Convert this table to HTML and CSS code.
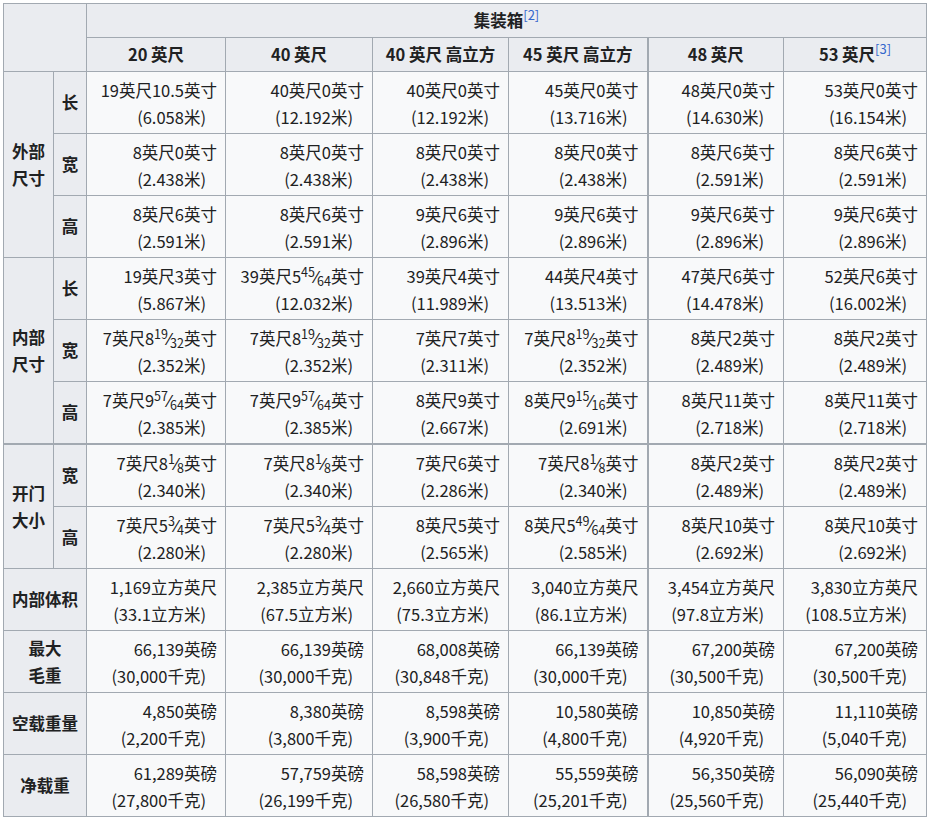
FILE: index.html
```html
<!DOCTYPE html>
<html lang="zh">
<head>
<meta charset="utf-8">
<title>集装箱尺寸</title>
<link rel="stylesheet" href="styles.css">
</head>
<body>
<table class="wikitable">
<colgroup>
<col class="c-a"><col class="c-b"><col class="c-1"><col class="c-2"><col class="c-3"><col class="c-4"><col class="c-5"><col class="c-6">
</colgroup>
<thead>
<tr class="h1">
<th colspan="2" rowspan="2"></th>
<th colspan="6">集装箱<sup class="ref">[2]</sup></th>
</tr>
<tr class="h2">
<th>20 英尺</th>
<th>40 英尺</th>
<th>40 英尺 高立方</th>
<th>45 英尺 高立方</th>
<th class="k">48 英尺</th>
<th>53 英尺<sup class="ref">[3]</sup></th>
</tr>
</thead>
<tbody>
<tr>
<th rowspan="3">外部<br>尺寸</th>
<th>长</th>
<td><span class="l1">19英尺10.5英寸</span><span class="l2">(6.058米)</span></td>
<td><span class="l1">40英尺0英寸</span><span class="l2">(12.192米)</span></td>
<td><span class="l1">40英尺0英寸</span><span class="l2">(12.192米)</span></td>
<td><span class="l1">45英尺0英寸</span><span class="l2">(13.716米)</span></td>
<td class="k"><span class="l1">48英尺0英寸</span><span class="l2">(14.630米)</span></td>
<td><span class="l1">53英尺0英寸</span><span class="l2">(16.154米)</span></td>
</tr>
<tr>
<th>宽</th>
<td><span class="l1">8英尺0英寸</span><span class="l2">(2.438米)</span></td>
<td><span class="l1">8英尺0英寸</span><span class="l2">(2.438米)</span></td>
<td><span class="l1">8英尺0英寸</span><span class="l2">(2.438米)</span></td>
<td><span class="l1">8英尺0英寸</span><span class="l2">(2.438米)</span></td>
<td class="k"><span class="l1">8英尺6英寸</span><span class="l2">(2.591米)</span></td>
<td><span class="l1">8英尺6英寸</span><span class="l2">(2.591米)</span></td>
</tr>
<tr>
<th>高</th>
<td><span class="l1">8英尺6英寸</span><span class="l2">(2.591米)</span></td>
<td><span class="l1">8英尺6英寸</span><span class="l2">(2.591米)</span></td>
<td><span class="l1">9英尺6英寸</span><span class="l2">(2.896米)</span></td>
<td><span class="l1">9英尺6英寸</span><span class="l2">(2.896米)</span></td>
<td class="k"><span class="l1">9英尺6英寸</span><span class="l2">(2.896米)</span></td>
<td><span class="l1">9英尺6英寸</span><span class="l2">(2.896米)</span></td>
</tr>
<tr>
<th rowspan="3">内部<br>尺寸</th>
<th>长</th>
<td><span class="l1">19英尺3英寸</span><span class="l2">(5.867米)</span></td>
<td><span class="l1">39英尺5<span class="fr"><sup>45</sup>⁄<sub>64</sub></span>英寸</span><span class="l2">(12.032米)</span></td>
<td><span class="l1">39英尺4英寸</span><span class="l2">(11.989米)</span></td>
<td><span class="l1">44英尺4英寸</span><span class="l2">(13.513米)</span></td>
<td class="k"><span class="l1">47英尺6英寸</span><span class="l2">(14.478米)</span></td>
<td><span class="l1">52英尺6英寸</span><span class="l2">(16.002米)</span></td>
</tr>
<tr>
<th>宽</th>
<td><span class="l1">7英尺8<span class="fr"><sup>19</sup>⁄<sub>32</sub></span>英寸</span><span class="l2">(2.352米)</span></td>
<td><span class="l1">7英尺8<span class="fr"><sup>19</sup>⁄<sub>32</sub></span>英寸</span><span class="l2">(2.352米)</span></td>
<td><span class="l1">7英尺7英寸</span><span class="l2">(2.311米)</span></td>
<td><span class="l1">7英尺8<span class="fr"><sup>19</sup>⁄<sub>32</sub></span>英寸</span><span class="l2">(2.352米)</span></td>
<td class="k"><span class="l1">8英尺2英寸</span><span class="l2">(2.489米)</span></td>
<td><span class="l1">8英尺2英寸</span><span class="l2">(2.489米)</span></td>
</tr>
<tr>
<th>高</th>
<td><span class="l1">7英尺9<span class="fr"><sup>57</sup>⁄<sub>64</sub></span>英寸</span><span class="l2">(2.385米)</span></td>
<td><span class="l1">7英尺9<span class="fr"><sup>57</sup>⁄<sub>64</sub></span>英寸</span><span class="l2">(2.385米)</span></td>
<td><span class="l1">8英尺9英寸</span><span class="l2">(2.667米)</span></td>
<td><span class="l1">8英尺9<span class="fr"><sup>15</sup>⁄<sub>16</sub></span>英寸</span><span class="l2">(2.691米)</span></td>
<td class="k"><span class="l1">8英尺11英寸</span><span class="l2">(2.718米)</span></td>
<td><span class="l1">8英尺11英寸</span><span class="l2">(2.718米)</span></td>
</tr>
<tr class="sep">
<th rowspan="2">开门<br>大小</th>
<th>宽</th>
<td><span class="l1">7英尺8<span class="fr"><sup>1</sup>⁄<sub>8</sub></span>英寸</span><span class="l2">(2.340米)</span></td>
<td><span class="l1">7英尺8<span class="fr"><sup>1</sup>⁄<sub>8</sub></span>英寸</span><span class="l2">(2.340米)</span></td>
<td><span class="l1">7英尺6英寸</span><span class="l2">(2.286米)</span></td>
<td><span class="l1">7英尺8<span class="fr"><sup>1</sup>⁄<sub>8</sub></span>英寸</span><span class="l2">(2.340米)</span></td>
<td class="k"><span class="l1">8英尺2英寸</span><span class="l2">(2.489米)</span></td>
<td><span class="l1">8英尺2英寸</span><span class="l2">(2.489米)</span></td>
</tr>
<tr>
<th>高</th>
<td><span class="l1">7英尺5<span class="fr"><sup>3</sup>⁄<sub>4</sub></span>英寸</span><span class="l2">(2.280米)</span></td>
<td><span class="l1">7英尺5<span class="fr"><sup>3</sup>⁄<sub>4</sub></span>英寸</span><span class="l2">(2.280米)</span></td>
<td><span class="l1">8英尺5英寸</span><span class="l2">(2.565米)</span></td>
<td><span class="l1">8英尺5<span class="fr"><sup>49</sup>⁄<sub>64</sub></span>英寸</span><span class="l2">(2.585米)</span></td>
<td class="k"><span class="l1">8英尺10英寸</span><span class="l2">(2.692米)</span></td>
<td><span class="l1">8英尺10英寸</span><span class="l2">(2.692米)</span></td>
</tr>
<tr>
<th colspan="2">内部体积</th>
<td><span class="l1">1,169立方英尺</span><span class="l2">(33.1立方米)</span></td>
<td><span class="l1">2,385立方英尺</span><span class="l2">(67.5立方米)</span></td>
<td><span class="l1">2,660立方英尺</span><span class="l2">(75.3立方米)</span></td>
<td><span class="l1">3,040立方英尺</span><span class="l2">(86.1立方米)</span></td>
<td class="k"><span class="l1">3,454立方英尺</span><span class="l2">(97.8立方米)</span></td>
<td><span class="l1">3,830立方英尺</span><span class="l2">(108.5立方米)</span></td>
</tr>
<tr>
<th colspan="2">最大<br>毛重</th>
<td><span class="l1">66,139英磅</span><span class="l2">(30,000千克)</span></td>
<td><span class="l1">66,139英磅</span><span class="l2">(30,000千克)</span></td>
<td><span class="l1">68,008英磅</span><span class="l2">(30,848千克)</span></td>
<td><span class="l1">66,139英磅</span><span class="l2">(30,000千克)</span></td>
<td class="k"><span class="l1">67,200英磅</span><span class="l2">(30,500千克)</span></td>
<td><span class="l1">67,200英磅</span><span class="l2">(30,500千克)</span></td>
</tr>
<tr>
<th colspan="2">空载重量</th>
<td><span class="l1">4,850英磅</span><span class="l2">(2,200千克)</span></td>
<td><span class="l1">8,380英磅</span><span class="l2">(3,800千克)</span></td>
<td><span class="l1">8,598英磅</span><span class="l2">(3,900千克)</span></td>
<td><span class="l1">10,580英磅</span><span class="l2">(4,800千克)</span></td>
<td class="k"><span class="l1">10,850英磅</span><span class="l2">(4,920千克)</span></td>
<td><span class="l1">11,110英磅</span><span class="l2">(5,040千克)</span></td>
</tr>
<tr>
<th colspan="2">净载重</th>
<td><span class="l1">61,289英磅</span><span class="l2">(27,800千克)</span></td>
<td><span class="l1">57,759英磅</span><span class="l2">(26,199千克)</span></td>
<td><span class="l1">58,598英磅</span><span class="l2">(26,580千克)</span></td>
<td><span class="l1">55,559英磅</span><span class="l2">(25,201千克)</span></td>
<td class="k"><span class="l1">56,350英磅</span><span class="l2">(25,560千克)</span></td>
<td><span class="l1">56,090英磅</span><span class="l2">(25,440千克)</span></td>
</tr>
</tbody>
</table>
</body>
</html>
```
FILE: styles.css
```css
html, body {
  margin: 0;
  background: #ffffff;
}
body {
  padding: 3px;
  font-family: "Noto Sans CJK SC", "Noto Sans", sans-serif;
  font-size: 16.5px;
  color: #202122;
}
.wikitable {
  border-collapse: collapse;
  table-layout: fixed;
  width: 923px;
  background: #f8f9fa;
  border: 1px solid #a2a9b1;
}
.c-a { width: 50px; }
.c-b { width: 33px; }
.c-1 { width: 139px; }
.c-2 { width: 147px; }
.c-3 { width: 136px; }
.c-4 { width: 139px; }
.c-5 { width: 136px; }
.c-6 { width: 143px; }

.wikitable th,
.wikitable td {
  border: 1px solid #a2a9b1;
  padding: 0 8px;
  line-height: 26.5px;
}
.wikitable th {
  background: #eaecf0;
  font-weight: bold;
  text-align: center;
  padding: 0 2px;
}
.wikitable td {
  text-align: right;
  vertical-align: middle;
  height: 59px;
  padding-top: 2px;
}
.h1 th, .h2 th { height: 33px; }
.wikitable .k { border-left: 2px solid #a2a9b1; }
.sep > th, .sep > td { border-top: 2px solid #a2a9b1; }

.l1, .l2 { display: block; white-space: nowrap; }
.l2 { padding-right: 11px; }

.ref {
  font-size: 13px;
  font-weight: normal;
  color: #3366cc;
  line-height: 0;
  vertical-align: 7px;
}
.fr { white-space: nowrap; }
.fr sup, .fr sub {
  font-size: 12.5px;
  line-height: 0;
}
.fr sup { vertical-align: 6px; }
.fr sub { vertical-align: -3px; }
```
